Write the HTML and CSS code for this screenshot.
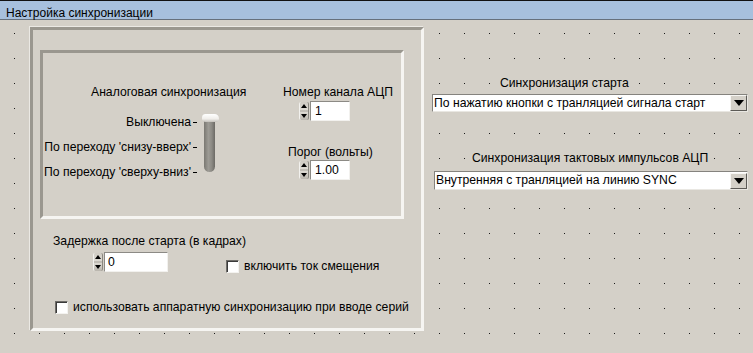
FILE: index.html
```html
<!DOCTYPE html>
<html lang="ru">
<head>
    <meta charset="UTF-8">
    <title>Настройка синхронизации</title>
    <link rel="stylesheet" href="styles.css">
</head>
<body>
<div class="titlebar">Настройка синхронизации</div>
<div class="workspace">
    <div class="frame outer">
        <div class="frame inner">
            <div class="analog">
                <div class="analog-title">Аналоговая синхронизация</div>
                <div class="analog-body">
                    <div class="ticks">
                        <div class="tick">Выключена</div>
                        <div class="tick">По переходу 'снизу-вверх'</div>
                        <div class="tick">По переходу 'сверху-вниз'</div>
                    </div>
                    <div class="slider">
                        <div class="track"></div>
                        <div class="thumb"></div>
                    </div>
                </div>
            </div>
            <div class="adc">
                <div class="adc-label">Номер канала АЦП</div>
                <div class="numeric adc-num"><span class="spin"></span><span class="num-box">1</span></div>
                <div class="adc-label second">Порог (вольты)</div>
                <div class="numeric adc-num"><span class="spin"></span><span class="num-box">1.00</span></div>
            </div>
        </div>
        <div class="delay">
            <div class="delay-label">Задержка после старта (в кадрах)</div>
            <div class="delay-row">
                <div class="numeric delay-num"><span class="spin"></span><span class="num-box wide">0</span></div>
                <label class="check bias"><span class="box"></span>включить ток смещения</label>
            </div>
            <label class="check hw"><span class="box"></span>использовать аппаратную синхронизацию при вводе серий</label>
        </div>
    </div>
    <div class="sync">
        <div class="sync-title first"><span>Синхронизация старта</span></div>
        <div class="combo start"><span class="combo-text">По нажатию кнопки с транляцией сигнала старт</span><span class="combo-btn"></span></div>
        <div class="sync-title second"><span>Синхронизация тактовых импульсов АЦП</span></div>
        <div class="combo clock"><span class="combo-text">Внутренняя с транляцией на линию SYNC</span><span class="combo-btn"></span></div>
    </div>
</div>
</body>
</html>
```

FILE: styles.css
```css
body {
    margin: 0;
    height: 353px;
    overflow: hidden;
    font-family: "Liberation Sans", Arial, sans-serif;
    font-size: 12.2px;
    line-height: 15px;
    color: #000;
    background-color: #d4d0c8;
    background-image: radial-gradient(circle, #1c1c1c 0 0.8px, transparent 1px);
    background-size: 25px 25px;
    background-position: 2px 21px;
}
.titlebar {
    height: 15px;
    padding: 3px 0 0 6px;
    font-size: 12px;
    line-height: 18px;
    background-color: #a7c0dd;
    border-top: 1px solid #111;
    border-bottom: 1px solid #66707c;
}
.workspace {
    display: flex;
}

/* frames */
.frame {
    box-sizing: border-box;
    border: 3px solid;
    border-color: #9a978f #f6f5f2 #f6f5f2 #9a978f;
    background-color: #d4d0c8;
}
.outer {
    width: 394px;
    height: 304px;
    margin: 7px 0 0 30px;
    box-shadow: -1px -1px 0 #ebe9e4;
}
.inner {
    width: 364px;
    height: 169px;
    margin: 20px 0 0 7px;
    padding: 32px 0 0 5px;
    display: flex;
}

/* analog sync */
.analog {
    width: 235px;
}
.analog-title {
    padding-left: 43px;
    white-space: nowrap;
}
.analog-body {
    display: flex;
    margin-top: 10px;
}
.ticks {
    width: 149px;
    display: flex;
    flex-direction: column;
    align-items: flex-end;
}
.tick {
    height: 25px;
    line-height: 25px;
    white-space: nowrap;
    display: flex;
    align-items: center;
}
.tick::after {
    content: "";
    width: 4px;
    height: 1px;
    margin-left: 2px;
    background-color: #000;
}
.slider {
    position: relative;
    width: 18px;
    height: 58px;
    margin: 4px 0 0 5px;
}
.track {
    width: 11px;
    height: 54px;
    margin: 4px 0 0 2px;
    border-radius: 2px 2px 6px 6px;
    background: linear-gradient(to right, #7a7872, #9d9b95 40%, #8c8a84 70%, #6c6a65);
}
.thumb {
    position: absolute;
    top: 0;
    left: 0;
    width: 17px;
    height: 8px;
    border-radius: 4px 5px 4px 4px;
    background: linear-gradient(#ffffff, #f0eeea 60%, #c4c1bb);
}

/* numeric controls */
.numeric {
    display: flex;
    align-items: flex-start;
}
.spin {
    box-sizing: border-box;
    width: 10px;
    height: 18px;
    margin: 1px 1px 0 0;
    padding: 2px 0;
    display: flex;
    flex-direction: column;
    justify-content: space-between;
    align-items: center;
    background: linear-gradient(#cfcbc3, #dedbd4 45%, #9c9890 50%, #dedbd4 55%, #b9b5ad);
    border-left: 1px solid #f2f1ee;
    border-right: 1px solid #8a8780;
    border-radius: 2px;
}
.spin::before {
    content: "";
    border: 3px solid transparent;
    border-top: 0;
    border-bottom: 4px solid #000;
}
.spin::after {
    content: "";
    border: 3px solid transparent;
    border-bottom: 0;
    border-top: 4px solid #000;
}
.num-box {
    box-sizing: border-box;
    width: 40px;
    height: 20px;
    padding: 2px 0 0 4px;
    background-color: #fff;
    border: 1px solid;
    border-color: #8c8a85 #f2f1ee #f2f1ee #8c8a85;
}
.num-box.wide {
    width: 64px;
    padding-left: 3px;
}

/* ADC group */
.adc {
    display: flex;
    flex-direction: column;
    align-items: flex-start;
}
.adc-label {
    white-space: nowrap;
}
.adc-label.second {
    margin: 24px 0 0 5px;
}
.adc-num {
    margin: 1px 0 0 16px;
}
.adc-label.second + .adc-num {
    margin-top: 0;
}

/* delay section */
.delay {
    padding: 15px 0 0 20px;
}
.delay-row {
    display: flex;
    margin-top: 3px;
}
.delay-num {
    margin-left: 40px;
}
.check {
    display: flex;
    align-items: center;
    white-space: nowrap;
}
.box {
    box-sizing: border-box;
    width: 13px;
    height: 13px;
    margin-right: 5px;
    background-color: #fff;
    border: 1px solid;
    border-color: #6e6c68 #f4f3f0 #f4f3f0 #6e6c68;
    box-shadow: inset 1px 1px 0 #3a3a3a;
}
.bias {
    margin: 7px 0 0 58px;
}
.hw {
    margin: 26px 0 0 2px;
}

/* right column */
.sync {
    width: 316px;
    margin-left: 8px;
}
.sync-title {
    display: flex;
}
.sync-title span {
    padding: 0 3px;
    background-color: #d4d0c8;
}
.sync-title.first {
    margin-top: 56px;
    padding-left: 65px;
}
.sync-title.second {
    margin-top: 39px;
    padding-left: 37px;
}
.combo {
    box-sizing: border-box;
    display: flex;
    align-items: center;
    height: 18px;
    margin-top: 3px;
    background-color: #fff;
    border: 1px solid;
    border-color: #85837e #e9e7e2 #e9e7e2 #85837e;
}
.combo.clock {
    height: 19px;
    margin: 5px 0 0 2px;
}
.combo-text {
    flex: 1;
    padding-left: 1px;
    white-space: nowrap;
}
.combo-btn {
    box-sizing: border-box;
    width: 17px;
    height: 16px;
    display: flex;
    align-items: center;
    justify-content: center;
    background-color: #d4d0c8;
    border: 1px solid;
    border-color: #f7f6f3 #5c5a56 #5c5a56 #f7f6f3;
}
.combo-btn::after {
    content: "";
    border: 5px solid transparent;
    border-bottom: 0;
    border-top: 6px solid #000;
}
```
